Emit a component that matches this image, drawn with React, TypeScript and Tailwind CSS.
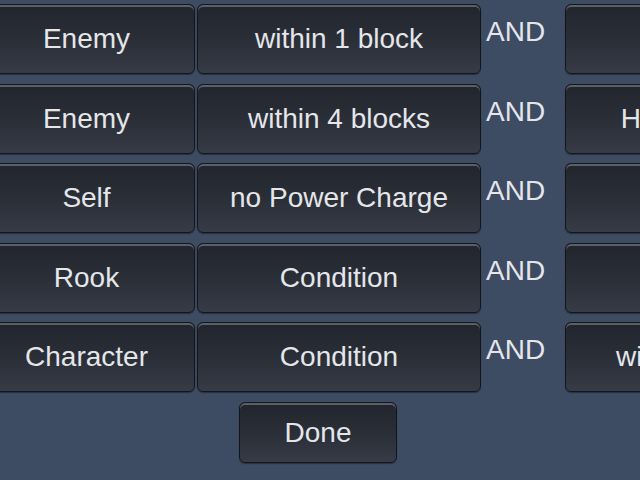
import type { ReactNode } from 'react'

type Row = { subject: string; condition: string; next?: string }

const rows: Row[] = [
  { subject: 'Enemy', condition: 'within 1 block' },
  { subject: 'Enemy', condition: 'within 4 blocks', next: 'HP below half' },
  { subject: 'Self', condition: 'no Power Charge' },
  { subject: 'Rook', condition: 'Condition' },
  { subject: 'Character', condition: 'Condition', next: 'within 4 blocks' },
]

// Bevelled dark button, like the stock game-engine skin
function Btn({ className = '', children }: { className?: string; children?: ReactNode }) {
  return (
    <button
      className={
        'shrink-0 flex items-center justify-center whitespace-nowrap overflow-hidden rounded-[6px] border border-[#13161b] ' +
        'bg-gradient-to-b from-[#22252d] via-[#2a2e37] to-[#363b46] ' +
        'shadow-[inset_0_2px_0_#5b5f68,0_1px_1px_rgba(0,0,0,0.35)] ' +
        'text-[28px] leading-[32px] text-[#e4e6ea] ' +
        className
      }
    >
      {children}
    </button>
  )
}

export default function App() {
  return (
    <div
      className="w-[640px] h-[480px] overflow-hidden bg-[#3d4b63] pt-[4px]"
      style={{ fontFamily: '"Liberation Sans", Arial, sans-serif' }}
    >
      <div className="flex flex-col gap-[9.5px] -ml-[22px]">
        {rows.map((r, i) => (
          <div key={i} className="flex h-[70px]">
            <Btn className="w-[217px] h-full">{r.subject}</Btn>
            <Btn className="w-[284px] h-full ml-[2px]">{r.condition}</Btn>
            <div className="w-[84px] shrink-0 pl-[5px] pt-[12px] text-[28px] leading-[32px] text-[#e4e6ea]">
              AND
            </div>
            <Btn className="w-[284px] h-full">{r.next ?? ''}</Btn>
          </div>
        ))}
      </div>
      <Btn className="w-[158px] h-[61px] ml-[239px] mt-[10px]">Done</Btn>
    </div>
  )
}
